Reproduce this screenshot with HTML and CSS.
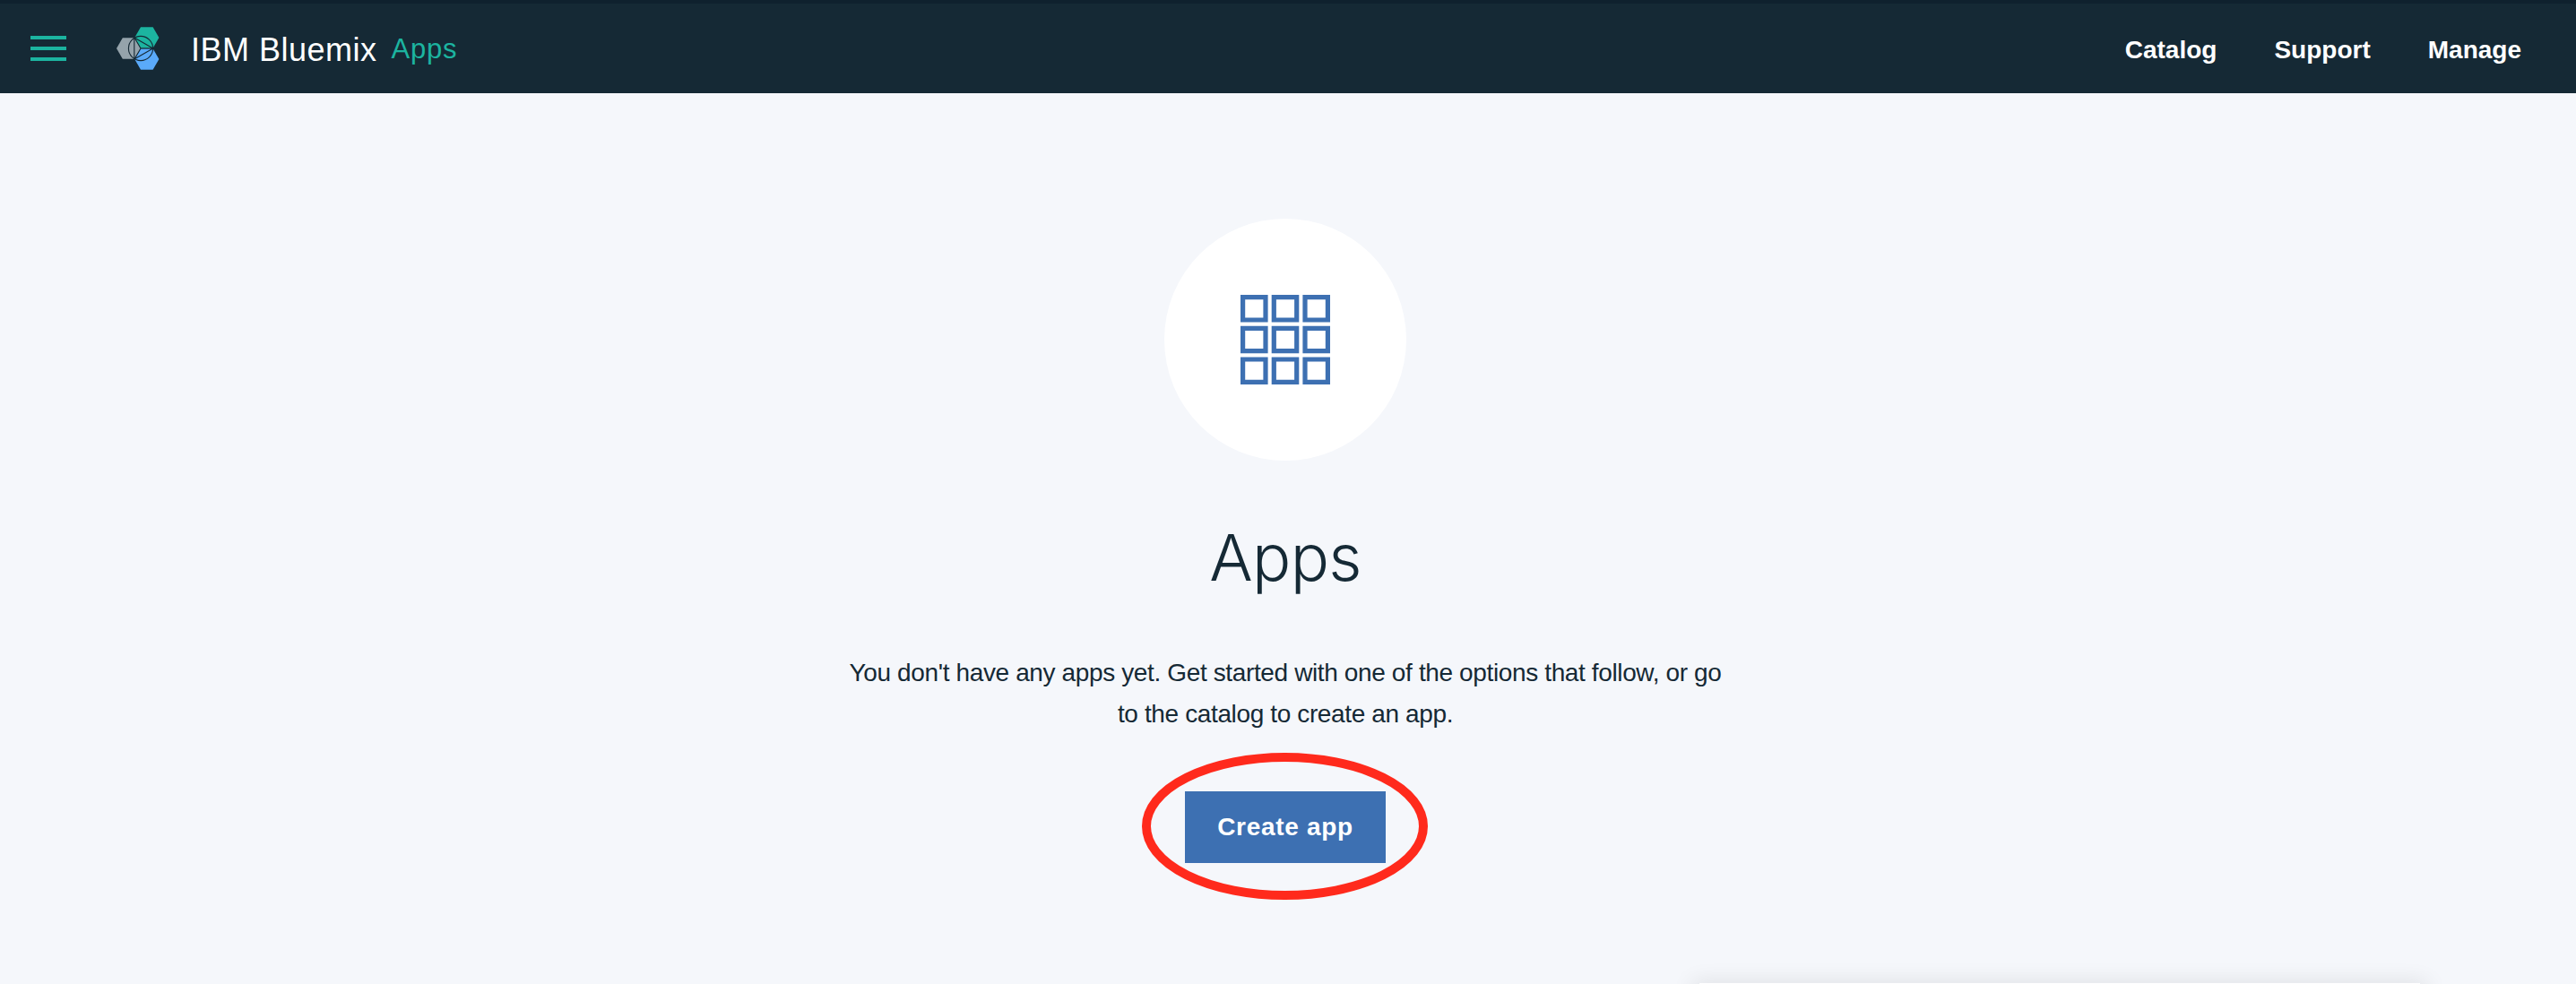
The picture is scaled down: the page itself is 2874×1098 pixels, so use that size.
FILE: index.html
```html
<!DOCTYPE html>
<html lang="en">
<head>
<meta charset="utf-8">
<title>IBM Bluemix Apps</title>
<link rel="stylesheet" href="styles.css">
</head>
<body>
<header class="topbar">
  <button class="menu" aria-label="Menu"><span></span><span></span><span></span></button>
  <svg class="logo" viewBox="0 0 48 48" width="48" height="48" aria-hidden="true">
    <path fill="#95a3ab" d="M0 24 6.8 12.2H20L27 24 20 35.8H6.8z"/>
    <path fill="#1cb4a0" d="M20.2 12 27 .2H40.6L47.4 12 40.6 23.8H27z"/>
    <path fill="#5aaafa" d="M20.2 36 27 24.2H40.6L47.4 36 40.6 47.8H27z"/>
    <g fill="none" stroke="#152935" stroke-width="1.1">
      <circle cx="27" cy="24" r="13.6"/>
      <path d="M19.8 12V36L40.8 24zM27 24H40.8M27 24 20 12M27 24 20 36"/>
    </g>
  </svg>
  <span class="brand">IBM Bluemix</span>
  <span class="section">Apps</span>
  <nav class="nav"><a>Catalog</a><a>Support</a><a>Manage</a></nav>
</header>
<main class="empty">
  <div class="badge">
    <svg viewBox="0 0 100 100" width="100" height="100" fill="none" stroke="#3d70b2" stroke-width="5.2" aria-hidden="true">
      <path d="M2.6 2.6h25.4v25.4h-25.4zM37.3 2.6h25.4v25.4h-25.4zM72 2.6h25.4v25.4h-25.4zM2.6 37.3h25.4v25.4h-25.4zM37.3 37.3h25.4v25.4h-25.4zM72 37.3h25.4v25.4h-25.4zM2.6 72h25.4v25.4h-25.4zM37.3 72h25.4v25.4h-25.4zM72 72h25.4v25.4h-25.4z"/>
    </svg>
  </div>
  <h1>Apps</h1>
  <p>You don't have any apps yet. Get started with one of the options that follow, or go<br>to the catalog to create an app.</p>
  <div class="action">
    <button class="create">Create app</button>
    <svg class="ring" viewBox="0 0 320 164" width="320" height="164" aria-hidden="true"><ellipse cx="159.5" cy="82" rx="154.5" ry="77" fill="none" stroke="#ff2a1c" stroke-width="10"/></svg>
  </div>
</main>
<aside class="panel"></aside>
</body>
</html>
```
FILE: styles.css
```css
* { box-sizing: border-box; }
body {
  margin: 0;
  height: 1098px;
  position: relative;
  overflow: hidden;
  background: #f5f7fb;
  color: #152935;
  font-family: "Liberation Sans", Arial, sans-serif;
}
button { border: 0; padding: 0; font: inherit; }
.topbar {
  display: flex;
  height: 104px;
  padding: 4px 61px 0 34px;
  background: #152935;
  box-shadow: inset 0 4px #0f212e;
}
.menu {
  display: flex;
  flex-direction: column;
  gap: 8px;
  width: 40px;
  margin-top: 36px;
  background: none;
}
.menu span { height: 4px; background: #1cb4a0; }
.logo { margin: 26px 0 0 56px; }
.brand {
  margin: 31px 0 0 35px;
  font-size: 36px;
  line-height: 42px;
  letter-spacing: .5px;
  color: #fff;
}
.section {
  margin: 33px 0 0 16px;
  font-size: 31px;
  line-height: 36px;
  letter-spacing: .8px;
  color: #1cb4a0;
}
.nav {
  display: flex;
  gap: 64px;
  margin: 36px 0 0 auto;
  font-size: 28px;
  line-height: 32px;
  font-weight: 700;
  color: #fff;
}
.empty {
  display: flex;
  flex-direction: column;
  align-items: center;
  padding: 140px 6px 0 0;
  text-align: center;
}
.badge {
  display: grid;
  place-items: center;
  width: 270px;
  height: 270px;
  border-radius: 50%;
  background: #fff;
}
h1 {
  margin: 64px 0 0;
  font: 300 72px/88px Inter, "Liberation Sans", sans-serif;
  letter-spacing: -.7px;
}
p {
  margin: 62px 0 0;
  font-size: 28px;
  line-height: 46px;
  letter-spacing: -.37px;
}
.action { position: relative; margin-top: 63px; }
.create {
  width: 224px;
  height: 80px;
  background: #3d70b2;
  color: #fff;
  font-size: 28px;
  font-weight: 700;
  letter-spacing: .7px;
}
.ring { position: absolute; left: -48px; top: -43px; }
.panel {
  position: absolute;
  left: 1896px;
  bottom: 0;
  width: 804px;
  height: 1px;
  background: #fff;
  box-shadow: 0 8px 24px 8px rgba(0, 0, 0, .12);
}
```
